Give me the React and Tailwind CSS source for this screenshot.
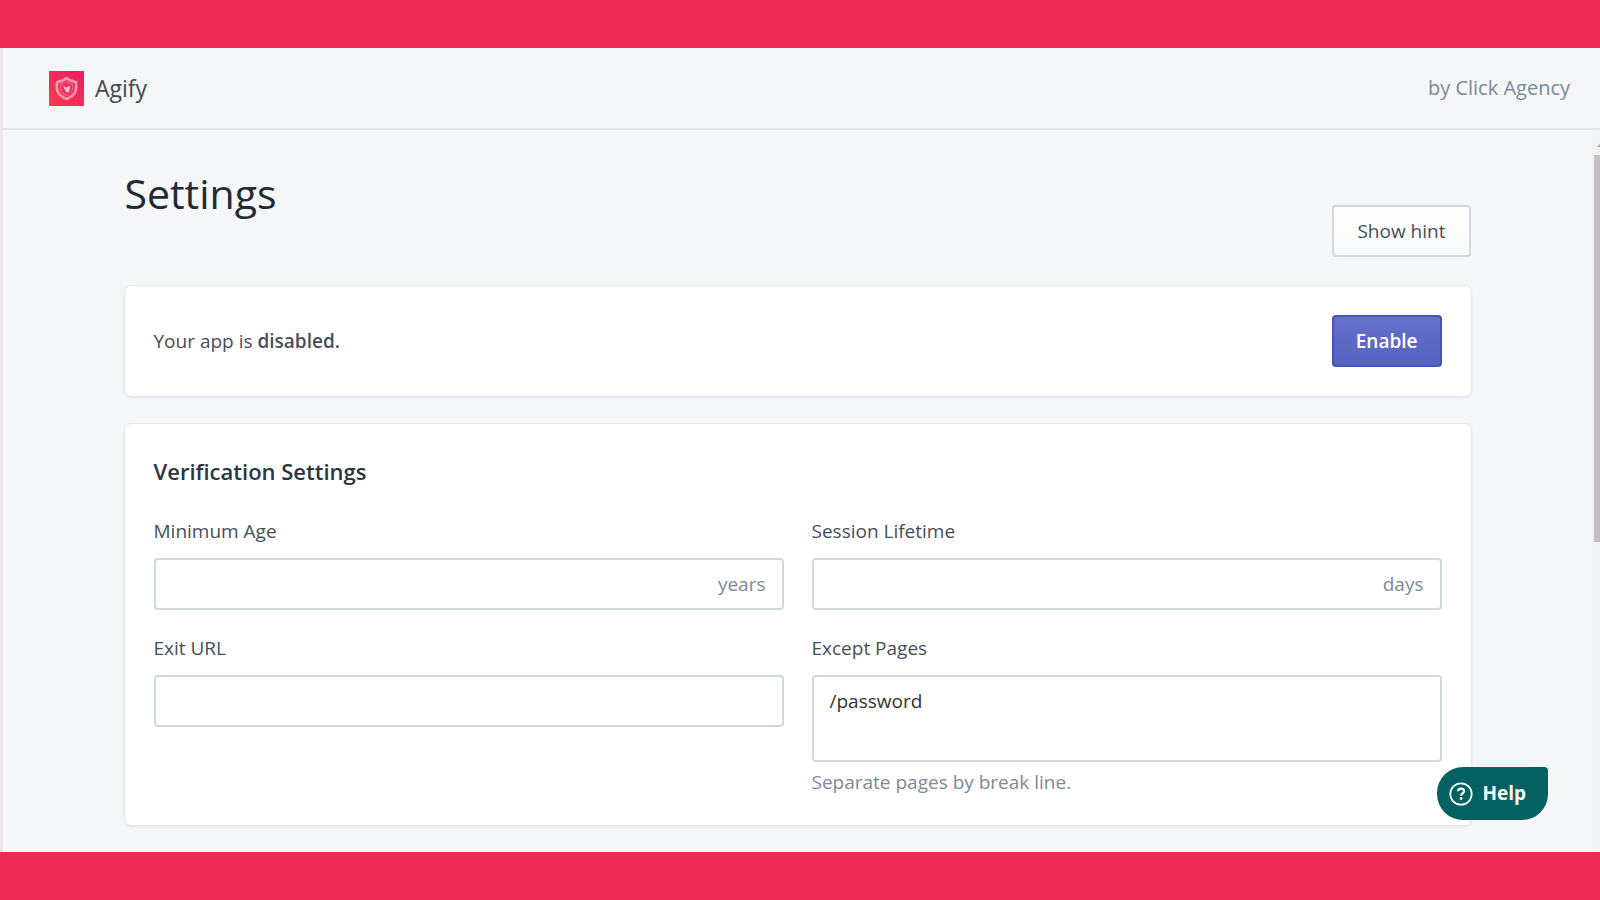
import { useState } from "react";

function Logo() {
  return (
    <svg viewBox="0 0 35 35" className="size-[35px] shrink-0" aria-hidden="true">
      <defs>
        <linearGradient id="logo-bg" x1="1" y1="0" x2="0" y2="1">
          <stop offset="0" stopColor="#e91e63" />
          <stop offset="1" stopColor="#fb3b50" />
        </linearGradient>
      </defs>
      <rect width="35" height="35" fill="url(#logo-bg)" />
      <g fill="none" stroke="#fff" strokeLinejoin="round">
        <path
          d="M17.500 7C20 9.200 23 10.600 26.800 11c.7 3.500.7 7-.6 10-1.500 3-4.700 5.400-8.700 7-4-1.600-7.200-4-8.700-7-1.300-3-1.300-6.500-.6-10C12 10.600 15 9.200 17.500 7z"
          strokeOpacity="0.5"
          strokeWidth="2.600"
        />
        <path
          d="M17.500 10.800c1.900 1.400 3.900 2.200 6 2.400.4 4.600-.2 8.600-6 11.200-5.800-2.600-6.400-6.600-6-11.200 2.100-.2 4.100-1 6-2.400z"
          strokeOpacity="0.3"
        />
      </g>
      <path d="M14 14.800l3.200 1.700 4.300-1.900-1.500 6.200-2.300.7-1.700-2.300-2-4.400z" fill="#fff" fillOpacity="0.7" />
    </svg>
  );
}

function HelpIcon() {
  return (
    <svg viewBox="0 0 24 24" className="size-6 shrink-0" fill="none" stroke="#fff" aria-hidden="true">
      <circle cx="12" cy="12" r="10.700" strokeWidth="1.700" />
      <path d="M9 9.300c.1-1.600 1.300-2.600 3-2.600s3 1 3 2.500c0 2.100-2.900 2.200-2.900 4.500" strokeWidth="2.200" />
      <circle cx="12.100" cy="16.500" r="1.400" fill="#fff" stroke="none" />
    </svg>
  );
}

function Field({ id, label, suffix, value, onChange }) {
  return (
    <div>
      <label htmlFor={id} className="mb-[13px] block leading-7">
        {label}
      </label>
      <div className="flex h-[52px] items-center rounded border-2 border-[#d0d8e0] bg-white pr-4">
        <input
          id={id}
          type="text"
          value={value}
          onChange={onChange}
          className="h-full min-w-0 flex-1 bg-transparent pl-4 outline-none"
        />
        {suffix && <span className="text-[#7a8a99]">{suffix}</span>}
      </div>
    </div>
  );
}

export default function App() {
  const [enabled, setEnabled] = useState(false);
  const [settings, setSettings] = useState({
    minimumAge: "",
    sessionLifetime: "",
    exitUrl: "",
    exceptPages: "/password",
  });

  const update = (key) => (e) => {
    setSettings({ ...settings, [key]: e.target.value });
  };

  return (
    <div className="flex min-h-screen flex-col bg-[#eb2b55] py-12 font-['Open_Sans','Noto_Sans',sans-serif] text-[19px] text-[#454f5b]">
      <div className="flex flex-1 flex-col border-l-[3px] border-[#ece8ec] bg-[#f4f6f8]">
        <header className="flex h-[82px] items-center justify-between border-b-2 border-[#e3e6ec] pr-[30px] pl-[46px]">
          <div className="flex items-center gap-[11px]">
            <Logo />
            <span className="text-[23px] text-[#3f4853]">Agify</span>
          </div>
          <span className="text-[20px] text-[#7a8a99]">by Click Agency</span>
        </header>

        <div className="flex flex-1">
          <main className="flex-1 px-10 pt-[35px] pb-[26px]">
            <div className="mx-auto flex max-w-[1346px] flex-col gap-7">
              <div className="flex items-start justify-between">
                <h1 className="text-[41px] leading-14 text-[#212b36]">Settings</h1>
                <button
                  type="button"
                  className="mt-10 mb-px h-[52px] rounded border-2 border-[#d0d8e0] bg-linear-to-b from-white to-[#f9fafb] px-[23px]"
                >
                  Show hint
                </button>
              </div>

              <section className="flex items-center justify-between rounded-md bg-white p-[29px] shadow-[0_0_0_1px_#e6e8eb,0_1px_3px_#d5d9de]">
                <p>
                  Your app is <strong className="font-semibold">{enabled ? "enabled" : "disabled"}.</strong>
                </p>
                <button
                  type="button"
                  onClick={() => setEnabled(!enabled)}
                  className="h-[52px] rounded border-2 border-[#4553b5] bg-linear-to-b from-[#6571c9] to-[#5563c1] px-[22px] font-semibold text-white"
                >
                  {enabled ? "Disable" : "Enable"}
                </button>
              </section>

              <section className="rounded-md bg-white p-[29px] shadow-[0_0_0_1px_#e6e8eb,0_1px_3px_#d5d9de]">
                <h2 className="mb-7 text-[22px] leading-9 font-semibold text-[#2c3642]">Verification Settings</h2>
                <div className="grid grid-cols-2 gap-x-7 gap-y-6">
                  <Field
                    id="minimum-age"
                    label="Minimum Age"
                    suffix="years"
                    value={settings.minimumAge}
                    onChange={update("minimumAge")}
                  />
                  <Field
                    id="session-lifetime"
                    label="Session Lifetime"
                    suffix="days"
                    value={settings.sessionLifetime}
                    onChange={update("sessionLifetime")}
                  />
                  <Field id="exit-url" label="Exit URL" value={settings.exitUrl} onChange={update("exitUrl")} />
                  <div>
                    <label htmlFor="except-pages" className="mb-[13px] block leading-7">
                      Except Pages
                    </label>
                    <textarea
                      id="except-pages"
                      rows={2}
                      value={settings.exceptPages}
                      onChange={update("exceptPages")}
                      aria-describedby="except-pages-hint"
                      className="block h-[87px] w-full resize-none rounded border-2 border-[#d0d8e0] bg-white px-4 py-[10px] leading-7 text-[#333] outline-none"
                    />
                    <p id="except-pages-hint" className="mt-1.5 leading-7 text-[#7a8a99]">
                      Separate pages by break line.
                    </p>
                  </div>
                </div>
              </section>
            </div>
          </main>

          {/* scroll bar */}
          <div className="flex w-2 flex-col items-end bg-[#f3f2f4]">
            <svg viewBox="0 0 3 25" className="h-[25px] w-[3px]" aria-hidden="true">
              <path d="M0 17l3-3v3z" fill="#a3a3a3" />
            </svg>
            <div className="h-[387px] w-1.5 bg-[#c1bfc1]" />
          </div>
        </div>
      </div>

      <button
        type="button"
        className="fixed right-[52px] bottom-20 flex h-[53px] items-center gap-[9px] rounded-[26px] rounded-tr bg-[#036162] pr-[22px] pl-3 text-white"
      >
        <HelpIcon />
        <span className="font-bold">Help</span>
      </button>
    </div>
  );
}
